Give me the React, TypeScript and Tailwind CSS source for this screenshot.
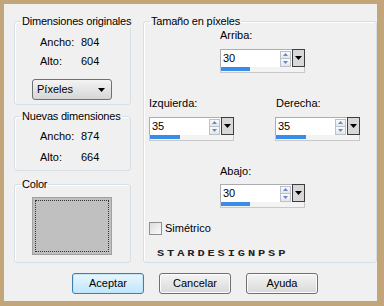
import React from 'react';

function DownTriangle({ className = '' }: { className?: string }) {
  return (
    <svg width="7" height="4" viewBox="0 0 7 4" className={className}>
      <path d="M0 0h7L3.5 4z" fill="#000" />
    </svg>
  );
}

function Spinner() {
  return (
    <div className="mr-[1px] flex h-[16px] w-[11px] flex-col">
      <div className="flex h-[8px] items-center justify-center border border-[#b9c1cc] bg-gradient-to-b from-[#fbfbfb] to-[#e3e6ea]">
        <svg width="5" height="3" viewBox="0 0 5 3">
          <path d="M0 3h5L2.5 0z" fill="#6a86cf" />
        </svg>
      </div>
      <div className="flex h-[8px] items-center justify-center border border-t-0 border-[#b9c1cc] bg-gradient-to-b from-[#fbfbfb] to-[#e3e6ea]">
        <svg width="5" height="3" viewBox="0 0 5 3">
          <path d="M0 0h5L2.5 3z" fill="#6a86cf" />
        </svg>
      </div>
    </div>
  );
}

function SpinInput({ value, bar, className = '' }: { value: string; bar: string; className?: string }) {
  return (
    <div className={`flex w-[85px] flex-col ${className}`}>
      <div className="flex h-[18px]">
        <div className="flex flex-1 items-center border border-b-0 border-r-0 border-[#abadb3] bg-white pl-[2px]">
          <span className="flex-1 text-[11px] leading-none">{value}</span>
          <Spinner />
        </div>
        <div className="flex w-[13px] items-center justify-center border border-[#3d3d3d] bg-[#d8d8d8]">
          <DownTriangle />
        </div>
      </div>
      <div className="h-[6px] border border-t-0 border-[#c8c8c8] bg-[#f3f3f3]">
        <div className={`h-[4px] bg-[#3a8de6] ${bar}`} />
      </div>
    </div>
  );
}

function Group({ title, className = '', children }: { title: string; className?: string; children: React.ReactNode }) {
  return (
    <fieldset className={`min-w-0 rounded-[3px] border border-[#d5dfe5] shadow-[inset_1px_1px_0_#fff] ${className}`}>
      <legend className="ml-[6px] whitespace-nowrap px-[1px] text-[11px] leading-[13px] tracking-[-0.2px]">{title}</legend>
      {children}
    </fieldset>
  );
}

function Button({ label, primary = false }: { label: string; primary?: boolean }) {
  return (
    <button
      className={`h-[21px] w-[72px] rounded-[3px] border text-[11px] leading-none ${
        primary
          ? 'border-[#3c7fb1] bg-gradient-to-b from-[#eaf6fd] to-[#bee6fd] shadow-[inset_0_0_0_1px_#c4e5f6]'
          : 'border-[#707070] bg-gradient-to-b from-[#f4f4f4] to-[#d9d9d9] shadow-[inset_0_0_0_1px_#fcfcfc]'
      }`}
    >
      {label}
    </button>
  );
}

export default function App() {
  return (
    <div className="h-[306px] w-[384px] bg-[#c2a679] pb-[5px] pl-[4px] pr-[7px] pt-[4px] font-['Liberation_Sans',Arial,sans-serif] text-black">
      <div className="flex h-full flex-col bg-[#f0f0f0] pl-[10px] pt-[11px]">
        <div className="flex gap-[12px]">
          <div className="flex w-[117px] flex-col">
            <Group title="Dimensiones originales" className="h-[90px]">
              <div className="pl-[25px] pt-[8px] text-[11px] leading-[13px]">
                <div className="flex">
                  <span className="w-[41px]">Ancho:</span>
                  <span>804</span>
                </div>
                <div className="mt-[6px] flex">
                  <span className="w-[41px]">Alto:</span>
                  <span>604</span>
                </div>
              </div>
              <div className="ml-[17px] mt-[11px] flex h-[21px] w-[80px] items-center justify-between rounded-[3px] border border-[#707070] bg-gradient-to-b from-[#f4f4f4] to-[#d6d6d6] pl-[4px] pr-[6px] text-[11px]">
                <span>Píxeles</span>
                <DownTriangle />
              </div>
            </Group>
            <Group title="Nuevas dimensiones" className="mt-[5px] h-[61px]">
              <div className="pl-[25px] pt-[7px] text-[11px] leading-[13px]">
                <div className="flex">
                  <span className="w-[41px]">Ancho:</span>
                  <span>874</span>
                </div>
                <div className="mt-[8px] flex">
                  <span className="w-[41px]">Alto:</span>
                  <span>664</span>
                </div>
              </div>
            </Group>
            <Group title="Color" className="mt-[7px] h-[85px]">
              <div className="ml-[17px] mt-[6px] h-[58px] w-[80px] border border-[#a0a0a0] bg-[#c0c0c0] p-[2px]">
                <div className="h-full w-full border border-dotted border-[#333]" />
              </div>
            </Group>
          </div>

          <Group title="Tamaño en píxeles" className="h-[248px] w-[235px]">
            <div className="pl-[5px] pt-[1px] text-[11px] leading-[13px]">
              <div className="ml-[71px] flex flex-col">
                <span>Arriba:</span>
                <SpinInput value="30" bar="w-[29px]" className="mt-[7px]" />
              </div>
              <div className="mt-[24px] flex gap-[41px]">
                <div className="flex flex-col">
                  <span>Izquierda:</span>
                  <SpinInput value="35" bar="w-[30px]" className="mt-[7px]" />
                </div>
                <div className="flex flex-col">
                  <span className="pl-[1px]">Derecha:</span>
                  <SpinInput value="35" bar="w-[30px]" className="mt-[7px]" />
                </div>
              </div>
              <div className="ml-[71px] mt-[24px] flex flex-col">
                <span>Abajo:</span>
                <SpinInput value="30" bar="w-[29px]" className="mt-[6px]" />
              </div>
              <label className="mt-[14px] flex items-center gap-[3px]">
                <span className="h-[13px] w-[13px] border border-[#8e8f8f] bg-gradient-to-br from-[#dcdcdc] to-[#fbfbfb]" />
                <span>Simétrico</span>
              </label>
              <div className="ml-[8px] mt-[13px] origin-left scale-y-[0.7] font-['Liberation_Mono',monospace] text-[12px] font-bold leading-none tracking-[2.9px] text-[#222]">
                STARDESIGNPSP
              </div>
            </div>
          </Group>
        </div>

        <div className="mt-[10px] flex gap-[15px] pl-[58px]">
          <Button label="Aceptar" primary />
          <Button label="Cancelar" />
          <Button label="Ayuda" />
        </div>
      </div>
    </div>
  );
}
